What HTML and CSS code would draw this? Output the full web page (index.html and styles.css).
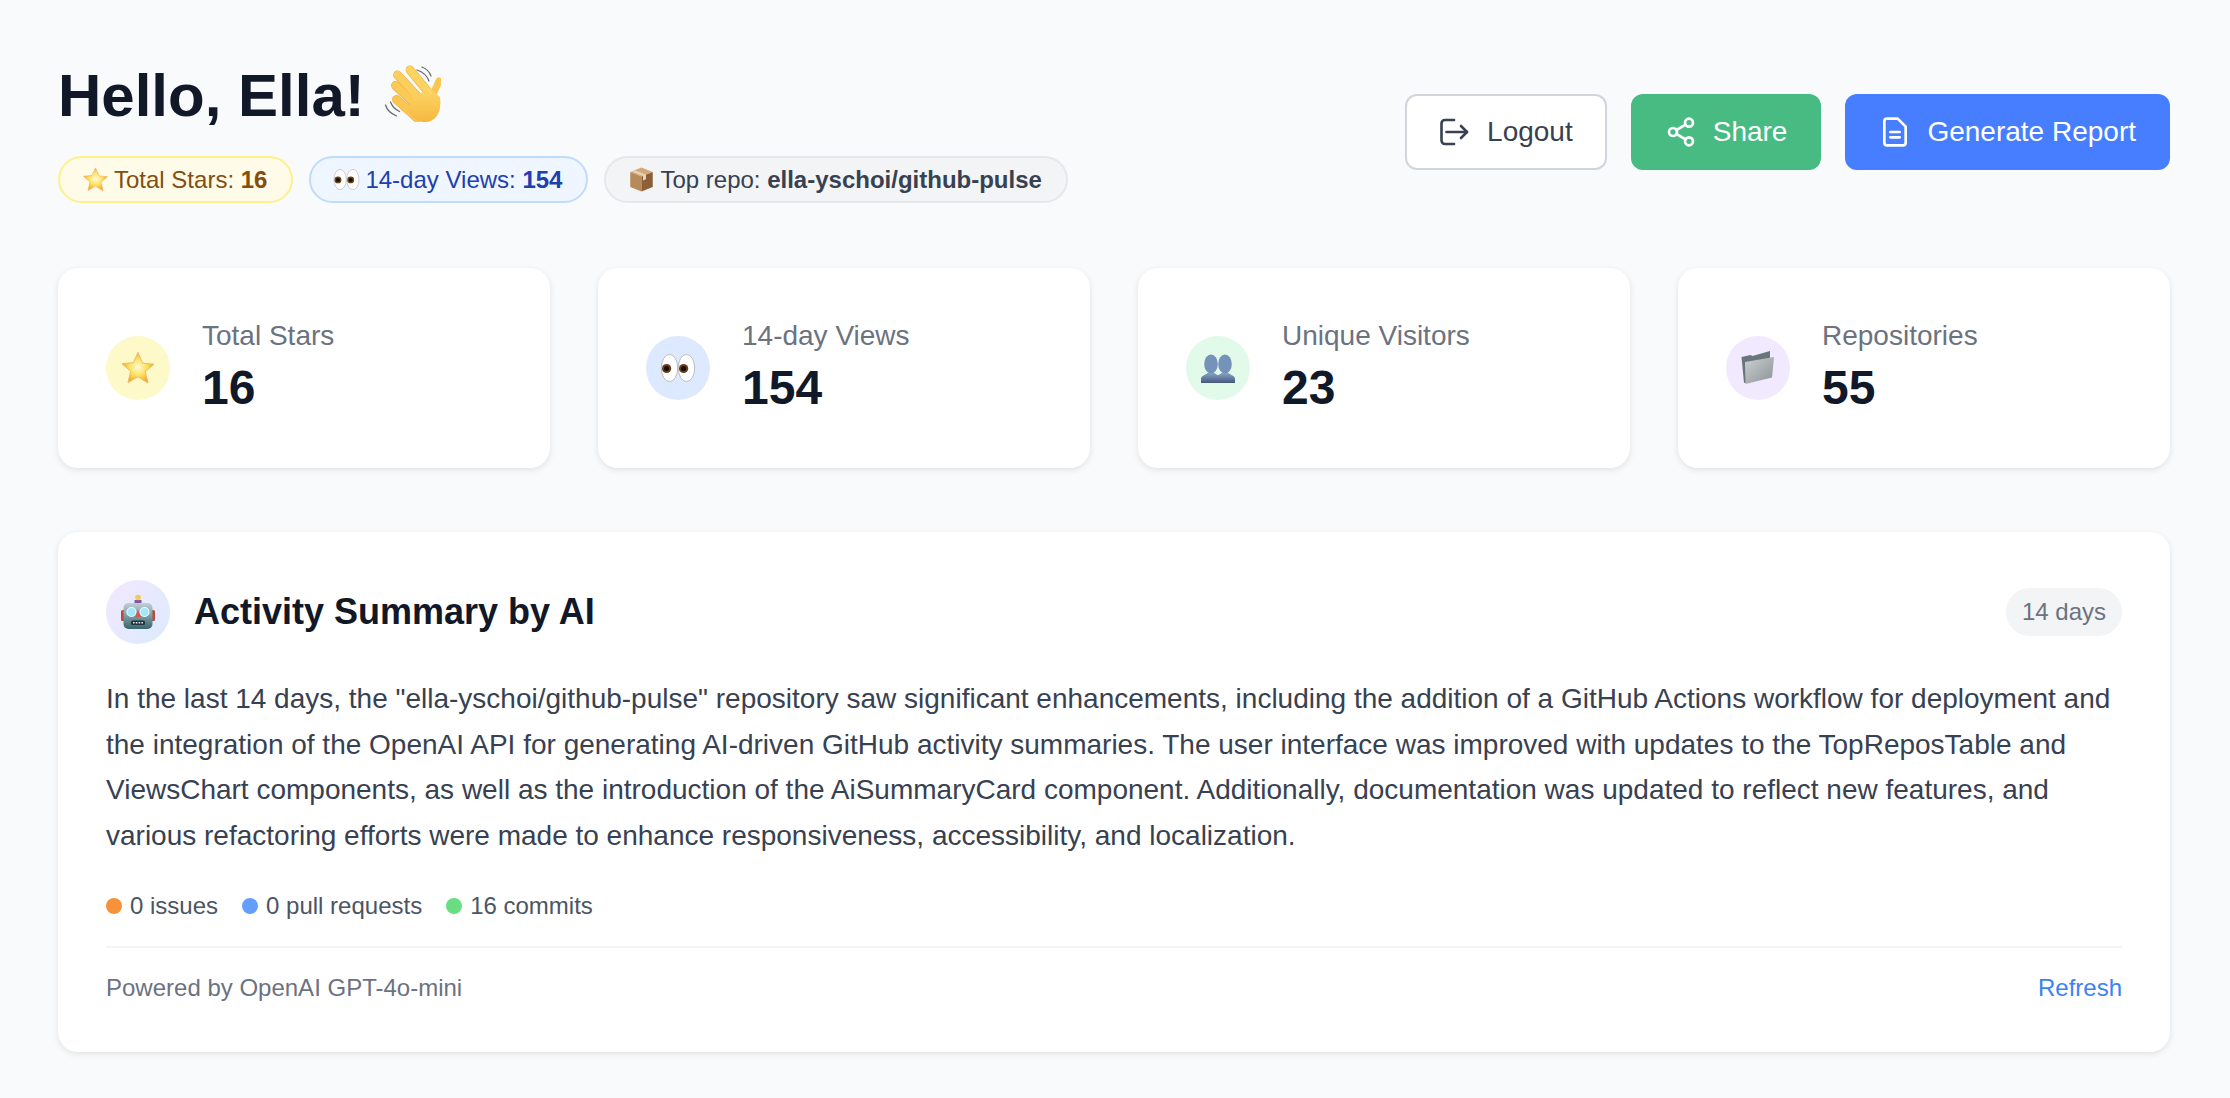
FILE: index.html
```html
<!DOCTYPE html>
<html lang="en">
<head>
    <meta charset="UTF-8">
    <title>GitHub Pulse</title>
    <link rel="stylesheet" href="styles.css">
</head>
<body>
<svg class="sprites" aria-hidden="true">
    <defs>
        <linearGradient id="hand_fill" x1="0" y1="0" x2="0" y2="1">
            <stop offset="0" stop-color="#fdd768"/>
            <stop offset="1" stop-color="#f6b73f"/>
        </linearGradient>
        <radialGradient id="star_fill" cx="0.5" cy="0.48" r="0.55">
            <stop offset="0" stop-color="#fffbd8"/>
            <stop offset="0.5" stop-color="#fde25f"/>
            <stop offset="1" stop-color="#ee9c1c"/>
        </radialGradient>
        <linearGradient id="people_fill" x1="0" y1="0" x2="0" y2="1">
            <stop offset="0" stop-color="#86a3c6"/>
            <stop offset="1" stop-color="#46597c"/>
        </linearGradient>
        <linearGradient id="folder_fill" x1="0" y1="0" x2="1" y2="1">
            <stop offset="0" stop-color="#ccd0d2"/>
            <stop offset="1" stop-color="#8b9294"/>
        </linearGradient>
        <linearGradient id="robot_fill" x1="0" y1="0" x2="0" y2="1">
            <stop offset="0" stop-color="#c3cfd6"/>
            <stop offset="1" stop-color="#38666f"/>
        </linearGradient>
        <symbol id="emoji_star" viewBox="0 0 36 36">
            <path d="M18 2.500l4.600 10.700 11.400 1-8.700 7.500 2.700 11.300L18 26.800 8 32.500l2.700-11.300L2 13.700l11.400-1z" fill="url(#star_fill)" stroke="#f1b768" stroke-width="1" stroke-linejoin="round"/>
        </symbol>
        <symbol id="emoji_eyes" viewBox="0 0 36 36">
            <ellipse cx="9.500" cy="18" rx="8.200" ry="13.600" fill="#fff" stroke="#bdbdbd" stroke-width="1"/>
            <ellipse cx="26.500" cy="18" rx="8.200" ry="13.600" fill="#fff" stroke="#bdbdbd" stroke-width="1"/>
            <circle cx="6.600" cy="18.500" r="4.600" fill="#6a3d12"/>
            <circle cx="6.600" cy="18.500" r="2.600" fill="#111"/>
            <circle cx="23.600" cy="18.500" r="4.600" fill="#6a3d12"/>
            <circle cx="23.600" cy="18.500" r="2.600" fill="#111"/>
        </symbol>
        <symbol id="emoji_box" viewBox="0 0 36 36">
            <path d="M18 2l15 6-15 6L3 8z" fill="#d3a87a"/>
            <path d="M3 8l15 6v20L3 28z" fill="#b78a5c"/>
            <path d="M33 8l-15 6v20l15-6z" fill="#8b5f38"/>
            <path d="M9 5.600l15 6v6l-4 1.600v-6L5 7.200z" fill="#e9d3b4"/>
        </symbol>
        <symbol id="emoji_people" viewBox="0 0 36 36">
            <path d="M1 33v-4.500c0-2.500 4.500-3.500 6.500-5.500h7c2 2 6.500 3 6.500 5.500V33z" fill="url(#people_fill)"/>
            <ellipse cx="11" cy="14" rx="6.800" ry="9.500" fill="#7592b8"/>
            <path d="M15 33v-4.500c0-2.500 4.500-3.500 6.500-5.500h7c2 2 6.500 3 6.500 5.500V33z" fill="url(#people_fill)"/>
            <ellipse cx="25" cy="14" rx="6.800" ry="9.500" fill="#7592b8"/>
        </symbol>
        <symbol id="emoji_folder" viewBox="0 0 36 36">
            <path d="M1.500 7l9-2 2 1 17.500-5V27L4 33z" fill="#68757c"/>
            <path d="M5 12l29-5-2 20.500L5.500 34z" fill="url(#folder_fill)"/>
        </symbol>
        <symbol id="emoji_robot" viewBox="0 0 36 36">
            <rect x="14.500" y="6" width="7" height="4" fill="#7e5aa6"/>
            <circle cx="18" cy="3.500" r="2.800" fill="#f7c84b"/>
            <rect x="1" y="16" width="4" height="11" rx="1.500" fill="#b9483d"/>
            <rect x="31" y="16" width="4" height="11" rx="1.500" fill="#b9483d"/>
            <rect x="3.500" y="9" width="29" height="26" rx="5" fill="url(#robot_fill)"/>
            <circle cx="11.500" cy="18" r="4.500" fill="#a5e6f7" stroke="#e6fbff" stroke-width="1.200"/>
            <circle cx="24.500" cy="18" r="4.500" fill="#a5e6f7" stroke="#e6fbff" stroke-width="1.200"/>
            <path d="M18 15.500l2.800 7.500h-5.600z" fill="#d4574a"/>
            <rect x="11" y="26.500" width="14" height="4.500" rx="1.500" fill="#20343b"/>
            <path d="M13 28.700h10" stroke="#e5e5e5" stroke-width="1.600" stroke-dasharray="1.600 1.200"/>
        </symbol>
    </defs>
</svg>

<div class="page">
    <header class="top">
        <div class="greeting">
            <h1>Hello, Ella! <svg class="wave" viewBox="49 10 60 60">
                <g fill="none" stroke="#6d6d6d" stroke-width="1.300" stroke-linecap="round">
                    <path d="M85 18q9 3 12 11"/>
                    <path d="M90 15q7 3 9 9"/>
                    <path d="M53.500 53q2 7 11 11"/>
                    <path d="M58.500 50q2 6 9 9.500"/>
                </g>
                <g fill="none" stroke-linecap="round">
                    <g stroke="#e9a63c" stroke-width="8.800">
                        <path d="M64.500 47.500L85 66"/>
                        <path d="M63.500 33.500L84 53"/>
                        <path d="M65.500 23L87 46"/>
                        <path d="M78 18L97 41"/>
                    </g>
                    <path d="M64.500 47.500L85 66" stroke="#fbc650" stroke-width="7.800"/>
                    <path d="M63.500 33.500L84 53" stroke="#fbca55" stroke-width="7.800"/>
                    <path d="M65.500 23L87 46" stroke="#fccf5c" stroke-width="7.800"/>
                    <path d="M78 18L97 41" stroke="#fdd35f" stroke-width="7.800"/>
                    <path d="M107 29L99 47" stroke="#fbc650" stroke-width="7"/>
                </g>
                <path d="M82 45L97 36L108 45Q110 60 102 67Q92 74 82 66L75 58z" fill="url(#hand_fill)"/>
            </svg></h1>
            <div class="pills">
                <span class="pill pill_yellow">
                    <svg class="pill_icon"><use href="#emoji_star"/></svg>
                    <span>Total Stars: <b>16</b></span>
                </span>
                <span class="pill pill_blue">
                    <svg class="pill_icon"><use href="#emoji_eyes"/></svg>
                    <span>14-day Views: <b>154</b></span>
                </span>
                <span class="pill pill_gray">
                    <svg class="pill_icon"><use href="#emoji_box"/></svg>
                    <span>Top repo: <b>ella-yschoi/github-pulse</b></span>
                </span>
            </div>
        </div>
        <div class="actions">
            <button class="btn btn_white">
                <svg class="btn_icon" viewBox="0 0 32 32"><path d="M15 4H6a3.500 3.500 0 0 0-3.500 3.500v17A3.500 3.500 0 0 0 6 28h9"/><path d="M7.500 16H28"/><path d="M22 10l6 6-6 6"/></svg>
                Logout
            </button>
            <button class="btn btn_green">
                <svg class="btn_icon" viewBox="0 0 24 24"><circle cx="18" cy="5" r="3"/><circle cx="6" cy="12" r="3"/><circle cx="18" cy="19" r="3"/><path d="M8.590 13.510l6.830 3.980"/><path d="M15.410 6.510l-6.820 3.980"/></svg>
                Share
            </button>
            <button class="btn btn_blue">
                <svg class="btn_icon" viewBox="0 0 24 24"><path d="M14 2H6a2 2 0 0 0-2 2v16a2 2 0 0 0 2 2h12a2 2 0 0 0 2-2V8z"/><path d="M8.500 12h7"/><path d="M8.500 16h7"/></svg>
                Generate Report
            </button>
        </div>
    </header>

    <section class="stats">
        <div class="card stat">
            <span class="circle circle_yellow"><svg class="circle_icon"><use href="#emoji_star"/></svg></span>
            <div>
                <div class="stat_label">Total Stars</div>
                <div class="stat_value">16</div>
            </div>
        </div>
        <div class="card stat">
            <span class="circle circle_blue"><svg class="circle_icon"><use href="#emoji_eyes"/></svg></span>
            <div>
                <div class="stat_label">14-day Views</div>
                <div class="stat_value">154</div>
            </div>
        </div>
        <div class="card stat">
            <span class="circle circle_green"><svg class="circle_icon"><use href="#emoji_people"/></svg></span>
            <div>
                <div class="stat_label">Unique Visitors</div>
                <div class="stat_value">23</div>
            </div>
        </div>
        <div class="card stat">
            <span class="circle circle_purple"><svg class="circle_icon"><use href="#emoji_folder"/></svg></span>
            <div>
                <div class="stat_label">Repositories</div>
                <div class="stat_value">55</div>
            </div>
        </div>
    </section>

    <section class="card summary">
        <div class="summary_head">
            <span class="circle circle_mix"><svg class="circle_icon"><use href="#emoji_robot"/></svg></span>
            <h2>Activity Summary by AI</h2>
            <span class="days">14 days</span>
        </div>
        <p class="summary_text">In the last 14 days, the "ella-yschoi/github-pulse" repository saw significant enhancements, including the addition of a GitHub Actions workflow for deployment and the integration of the OpenAI API for generating AI-driven GitHub activity summaries. The user interface was improved with updates to the TopReposTable and ViewsChart components, as well as the introduction of the AiSummaryCard component. Additionally, documentation was updated to reflect new features, and various refactoring efforts were made to enhance responsiveness, accessibility, and localization.</p>
        <ul class="counts">
            <li><i class="dot dot_orange"></i>0 issues</li>
            <li><i class="dot dot_blue"></i>0 pull requests</li>
            <li><i class="dot dot_green"></i>16 commits</li>
        </ul>
        <div class="summary_foot">
            <span>Powered by OpenAI GPT-4o-mini</span>
            <a class="refresh" href="#">Refresh</a>
        </div>
    </section>
</div>
</body>
</html>
```

FILE: styles.css
```css
* {
    margin: 0;
    padding: 0;
    box-sizing: border-box;
    list-style: none;
}

body {
    background-color: #f9fafb;
    color: #111827;
    font-family: "Liberation Sans", Arial, sans-serif;
}

.sprites {
    display: block;
    width: 0;
    height: 0;
}

.page {
    padding: 60px 60px 45px 58px;
}

/* header */
.top {
    display: flex;
    justify-content: space-between;
    align-items: center;
    margin-bottom: 65px;
}

h1 {
    font-size: 60px;
    line-height: 72px;
    font-weight: 700;
    margin-bottom: 24px;
}

.wave {
    width: 60px;
    height: 60px;
    vertical-align: -6px;
}

.pills {
    display: flex;
    gap: 16px;
}

.pill {
    display: flex;
    align-items: center;
    gap: 5px;
    height: 47px;
    padding: 0 24px;
    border: 2px solid;
    border-radius: 24px;
    font-size: 24px;
}

.pill_icon {
    width: 27px;
    height: 27px;
    margin-left: -2px;
}

.pill_yellow {
    background-color: #fefce8;
    border-color: #fef08a;
    color: #854d0e;
}

.pill_blue {
    background-color: #eff6ff;
    border-color: #bfdbfe;
    color: #1e40af;
}

.pill_gray {
    background-color: #f3f4f6;
    border-color: #e5e7eb;
    color: #374151;
}

.actions {
    display: flex;
    gap: 24px;
}

.btn {
    display: flex;
    align-items: center;
    gap: 16px;
    height: 76px;
    padding: 0 32px;
    border: 2px solid transparent;
    border-radius: 12px;
    font-family: inherit;
    font-size: 28px;
    color: #fff;
}

.btn_icon {
    width: 32px;
    height: 32px;
    fill: none;
    stroke: currentColor;
    stroke-width: 2;
    stroke-linecap: round;
    stroke-linejoin: round;
}

.btn_white .btn_icon {
    stroke-width: 2.600;
}

.btn_white {
    background-color: #fff;
    border-color: #d1d5db;
    color: #374151;
}

.btn_green {
    background-color: #48bb82;
}

.btn_blue {
    background-color: #467eff;
}

/* cards */
.card {
    background-color: #fff;
    border-radius: 20px;
    box-shadow: 0 2px 6px rgba(0, 0, 0, 0.1);
}

.stats {
    display: grid;
    grid-template-columns: repeat(4, 1fr);
    gap: 48px;
    margin-bottom: 64px;
}

.stat {
    display: flex;
    align-items: center;
    gap: 32px;
    padding: 48px;
}

.circle {
    display: flex;
    align-items: center;
    justify-content: center;
    flex: none;
    width: 64px;
    height: 64px;
    border-radius: 50%;
}

.circle_icon {
    width: 36px;
    height: 36px;
}

.circle_yellow {
    background-color: #fef9c9;
}

.circle_blue {
    background-color: #dce9fe;
}

.circle_green {
    background-color: #e1fae9;
}

.circle_purple {
    background-color: #f1e9fd;
}

.circle_mix {
    background: linear-gradient(135deg, #f3e8ff, #dbeafe);
}

.stat_label {
    font-size: 28px;
    line-height: 40px;
    color: #6b7280;
}

.stat_value {
    font-size: 48px;
    line-height: 64px;
    font-weight: 700;
}

/* summary */
.summary {
    padding: 48px;
}

.summary_head {
    display: flex;
    align-items: center;
    gap: 24px;
    margin-bottom: 32px;
}

h2 {
    flex: 1;
    font-size: 36px;
    font-weight: 700;
}

.days {
    padding: 8px 16px;
    border-radius: 24px;
    background-color: #f3f4f6;
    color: #6b7280;
    font-size: 24px;
    line-height: 32px;
}

.summary_text {
    font-size: 28px;
    line-height: 45.500px;
    color: #374151;
    margin-bottom: 32px;
}

.counts {
    display: flex;
    gap: 24px;
    font-size: 24px;
    line-height: 32px;
    color: #4b5563;
    padding-bottom: 24px;
    border-bottom: 2px solid #f3f4f6;
}

.counts li {
    display: flex;
    align-items: center;
    gap: 8px;
}

.dot {
    width: 16px;
    height: 16px;
    border-radius: 50%;
}

.dot_orange {
    background-color: #f6923a;
}

.dot_blue {
    background-color: #659ffc;
}

.dot_green {
    background-color: #68de80;
}

.summary_foot {
    display: flex;
    justify-content: space-between;
    padding-top: 24px;
    font-size: 24px;
    line-height: 32px;
    color: #6b7280;
}

.refresh {
    color: #3b82f6;
    text-decoration: none;
}
```
